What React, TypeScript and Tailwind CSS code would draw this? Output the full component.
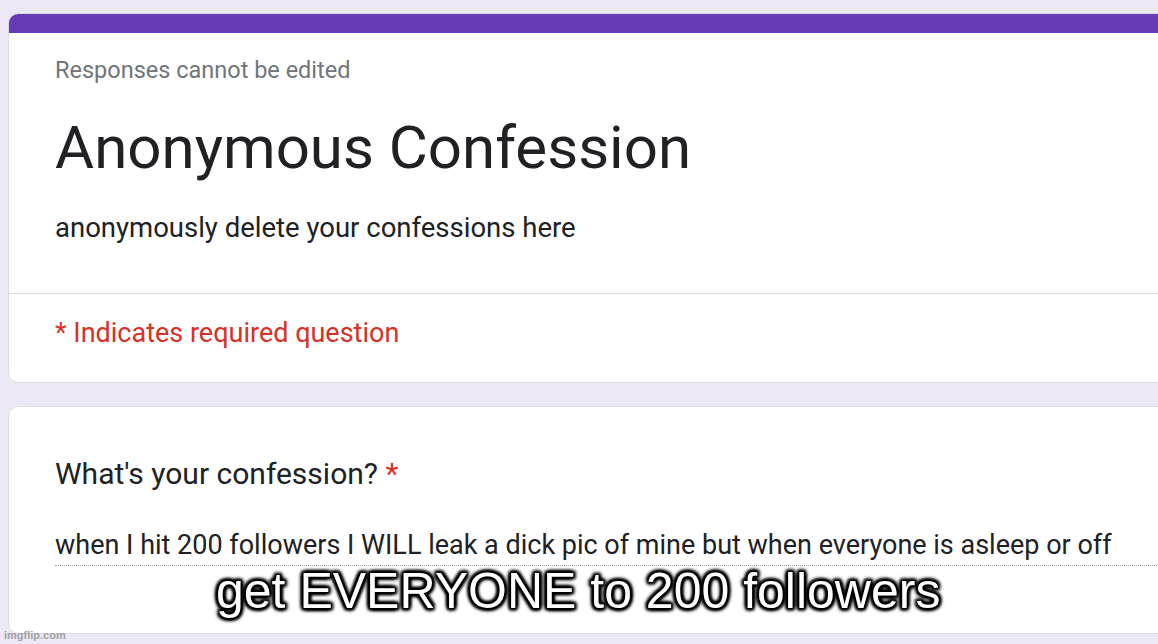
export default function App() {
  return (
    <div className="relative h-[644px] w-[1158px] overflow-hidden bg-[#ede8f6] font-['Roboto',sans-serif] text-[#202124]">
      <div className="pt-[13px] pl-[8px]">
        {/* header card */}
        <div className="w-[1200px] overflow-hidden rounded-[10px] border border-[#dadce0] bg-white">
          <div className="h-[19px] bg-[#673ab7]" />
          <div className="px-[46px] pt-[22px] pb-[49px]">
            <div className="text-[23.5px] leading-[30px] text-[#70757a]">Responses cannot be edited</div>
            <div className="mt-[31px] text-[60px] leading-[64px]">Anonymous Confession</div>
            <div className="mt-[32px] text-[27.5px] leading-[32px]">anonymously delete your confessions here</div>
          </div>
          <div className="border-t border-[#dadce0]" />
          <div className="px-[46px] pt-[24px] pb-[34px] text-[27px] leading-[30px] text-[#d93025]">
            * Indicates required question
          </div>
        </div>

        {/* question card */}
        <div className="mt-[23px] h-[228px] w-[1200px] rounded-[10px] border border-[#dadce0] bg-white px-[46px] pt-[50px]">
          <div className="text-[30px] leading-[34px]">
            What's your confession? <span className="text-[#d93025]">*</span>
          </div>
          <div className="mt-[39px] border-b border-dotted border-[#9aa0a6] pb-[5px] text-[27px] leading-[30px]">
            when I hit 200 followers I WILL leak a dick pic of mine but when everyone is asleep or off
          </div>
        </div>
      </div>

      {/* meme caption */}
      <div className="absolute left-[216px] top-[563px] font-['Liberation_Sans',Arial,sans-serif] text-[50px] leading-[56px] text-white [text-shadow:0_0_1px_#000,0_0_2px_#000,0_0_3px_#000,2px_2px_3px_#000,-2px_-2px_3px_#000,2px_-2px_3px_#000,-2px_2px_3px_#000,0_2px_4px_#000,0_-2px_4px_#000,2px_0_4px_#000,-2px_0_4px_#000]">
        get EVERYONE to 200 followers
      </div>
      <div className="absolute left-[4px] top-[628px] font-['Liberation_Sans',Arial,sans-serif] text-[11px] font-bold leading-[14px] text-[#a0a0a0]">
        imgflip.com
      </div>
    </div>
  );
}
